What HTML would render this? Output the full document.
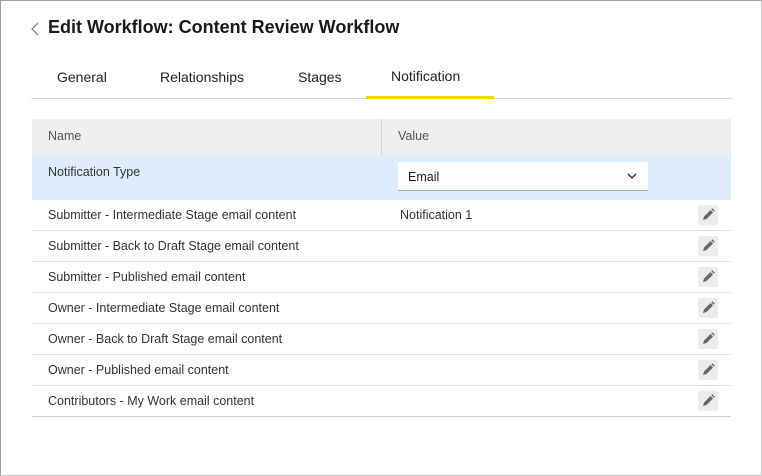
<!DOCTYPE html><html><head><style>
*{margin:0;padding:0;box-sizing:border-box}
body{width:762px;height:476px;background:#fff;font-family:"Liberation Sans",sans-serif;position:relative;overflow:hidden;color:#333}
.frame{position:absolute;left:0;top:0;width:762px;height:476px;border:1px solid #a0a0a0;border-right-color:#c8c8c8;border-bottom-color:#c8c8c8}
.a{position:absolute;white-space:nowrap}
h1{position:absolute;left:48px;top:17px;font-size:18px;font-weight:bold;color:#1a1a1a}
.tab{position:absolute;top:69px;font-size:14px;color:#222}
.row{position:absolute;left:32px;width:699px;height:31px;border-bottom:1px solid #e0e0e0;font-size:12.5px}
.row span{position:absolute;left:16px;top:8px}
.ed{position:absolute;left:666px;top:5px;width:20px;height:20px;background:#ececec;border-radius:2px}
</style></head><body>
<div class="frame"></div>
<svg class="a" style="left:30px;top:22px" width="10" height="14"><path d="M8 1L2 7l6 6" stroke="#888" stroke-width="1.3" fill="none"/></svg>
<h1>Edit Workflow: Content Review Workflow</h1>
<div class="tab" style="left:57px">General</div>
<div class="tab" style="left:160px">Relationships</div>
<div class="tab" style="left:298px">Stages</div>
<div class="tab" style="left:391px;top:68px">Notification</div>
<div class="a" style="left:31px;top:98px;width:701px;height:1px;background:#d8d8d8"></div>
<div class="a" style="left:366px;top:96px;width:128px;height:3px;background:#f5d800"></div>
<div class="a" style="left:32px;top:119px;width:699px;height:36px;background:#eeeff1;font-size:12.5px;color:#555">
<span class="a" style="left:16px;top:10px">Name</span>
<div class="a" style="left:349px;top:0;width:1px;height:36px;background:#d8d8d8"></div>
<span class="a" style="left:366px;top:10px">Value</span></div>
<div class="a" style="left:32px;top:155px;width:699px;height:45px;background:#deedfc;font-size:12.5px">
<span class="a" style="left:16px;top:10px">Notification Type</span>
<div class="a" style="left:366px;top:7px;width:250px;height:29px;background:#fff;border-bottom:1px solid #aaa">
<span class="a" style="left:10px;top:8px;color:#222">Email</span>
<svg class="a" style="left:229px;top:10px" width="10" height="8"><path d="M1 2l4 4 4-4" stroke="#333" stroke-width="1.5" fill="none"/></svg></div></div>
<div class="row" style="top:200px"><span>Submitter - Intermediate Stage email content</span><span style="left:368px">Notification 1</span><div class="ed"></div></div>
<div class="row" style="top:231px"><span>Submitter - Back to Draft Stage email content</span><div class="ed"></div></div>
<div class="row" style="top:262px"><span>Submitter - Published email content</span><div class="ed"></div></div>
<div class="row" style="top:293px"><span>Owner - Intermediate Stage email content</span><div class="ed"></div></div>
<div class="row" style="top:324px"><span>Owner - Back to Draft Stage email content</span><div class="ed"></div></div>
<div class="row" style="top:355px"><span>Owner - Published email content</span><div class="ed"></div></div>
<div class="row" style="top:386px;border-bottom-color:#ccc"><span>Contributors - My Work email content</span><div class="ed"></div></div>
<script>
document.querySelectorAll('.ed').forEach(e=>e.innerHTML='<svg width="20" height="20"><path d="M5 15l1-3.5 6.5-6.5 2.5 2.5-6.5 6.5z M13.3 4.2l1-1 2.5 2.5-1 1z" fill="#666"/></svg>');
</script>
</body></html>
